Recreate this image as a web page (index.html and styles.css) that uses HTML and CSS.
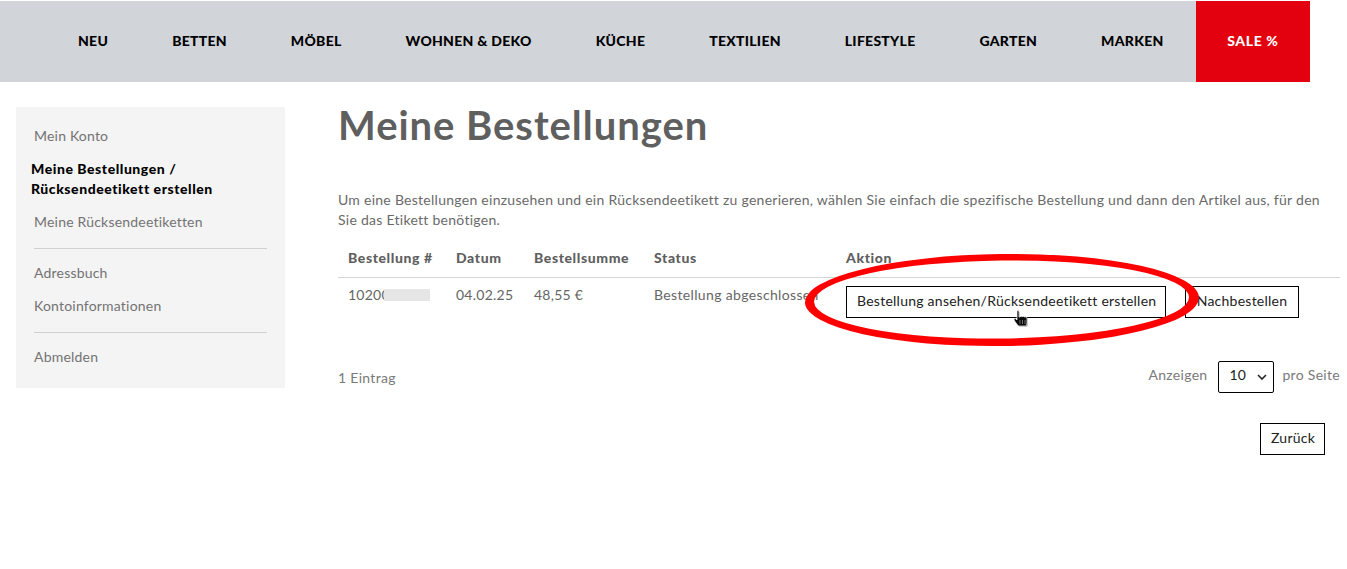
FILE: index.html
```html
<!DOCTYPE html>
<html lang="de">
<head>
<meta charset="utf-8">
<title>Meine Bestellungen</title>
<link rel="stylesheet" href="styles.css">
</head>
<body>
<nav class="nav">
  <a class="nav-item">NEU</a>
  <a class="nav-item">BETTEN</a>
  <a class="nav-item">MÖBEL</a>
  <a class="nav-item">WOHNEN &amp; DEKO</a>
  <a class="nav-item">KÜCHE</a>
  <a class="nav-item">TEXTILIEN</a>
  <a class="nav-item">LIFESTYLE</a>
  <a class="nav-item">GARTEN</a>
  <a class="nav-item">MARKEN</a>
  <a class="nav-item nav-sale">SALE %</a>
</nav>
<div class="page">
  <aside class="side">
    <a class="side-link">Mein Konto</a>
    <strong class="side-current">Meine Bestellungen / Rücksendeetikett erstellen</strong>
    <a class="side-link">Meine Rücksendeetiketten</a>
    <hr class="side-rule">
    <a class="side-link">Adressbuch</a>
    <a class="side-link">Kontoinformationen</a>
    <hr class="side-rule">
    <a class="side-link">Abmelden</a>
  </aside>
  <main class="main">
    <h1 class="title">Meine Bestellungen</h1>
    <p class="intro">Um eine Bestellungen einzusehen und ein Rücksendeetikett zu generieren, wählen Sie einfach die spezifische Bestellung und dann den Artikel aus, für den Sie das Etikett benötigen.</p>
    <table class="orders">
      <thead>
        <tr>
          <th class="col-id">Bestellung #</th>
          <th class="col-date">Datum</th>
          <th class="col-sum">Bestellsumme</th>
          <th class="col-status">Status</th>
          <th>Aktion</th>
        </tr>
      </thead>
      <tbody>
        <tr>
          <td><span class="order-no">10200<span class="redact"></span></span></td>
          <td>04.02.25</td>
          <td>48,55 €</td>
          <td class="status">Bestellung abgeschlossen</td>
          <td class="actions"><button class="btn btn-view">Bestellung ansehen/Rücksendeetikett erstellen</button><button class="btn btn-re">Nachbestellen</button></td>
        </tr>
      </tbody>
    </table>
    <div class="pager">
      <span class="count">1 Eintrag</span>
      <div class="per-page">
        <span class="per-label">Anzeigen</span>
        <span class="select">10<svg class="chev" width="10" height="6" viewBox="0 0 10 6"><path d="M1 1l4 4 4-4" fill="none" stroke="#222" stroke-width="1.6"/></svg></span>
        <span class="per-label">pro Seite</span>
      </div>
    </div>
    <div class="back"><button class="btn btn-back">Zurück</button></div>
  </main>
</div>
<svg class="mark" width="1347" height="569" viewBox="0 0 1347 569" aria-hidden="true">
  <g transform="rotate(-0.7 1002 300)">
    <path fill="#f00" fill-rule="evenodd" d="M805 300a197 46 0 1 0 394 0a197 46 0 1 0 -394 0ZM814 299.500a187.500 39 0 1 0 375 0a187.500 39 0 1 0 -375 0Z"/>
  </g>
  <path d="M1018 312c1-1 2 0 2 1v5h1c1-1 2-1 2 0 1-1 2-1 2 0 1-.5 3 0 3 1v5c0 2-1 3-2 3h-6c-1 0-2-2-3-3l-2-3c0-1 1-2 2-1l1 1v-9z" fill="#000" opacity=".3"/>
  <path d="M1017 311c1-1 2 0 2 1v5h1c1-1 2-1 2 0 1-1 2-1 2 0 1-.5 3 0 3 1v5c0 2-1 3-2 3h-6c-1 0-2-2-3-3l-2-3c0-1 1-2 2-1l1 1v-9z" fill="#0a0a0a" stroke="#fff" stroke-width=".7"/>
  <path d="M1020 320v4M1022.500 320v4M1025 320v4" stroke="#999" stroke-width=".7" fill="none"/>
</svg>
</body>
</html>
```

FILE: styles.css
```css
* { box-sizing: border-box; }
html, body { margin: 0; padding: 0; }
body {
  position: relative;
  width: 1347px;
  height: 569px;
  padding-top: 1px;
  overflow: hidden;
  background: #fff;
  color: #666;
  font-family: Lato, "Open Sans", sans-serif;
  font-size: 14px;
}
.nav {
  display: flex;
  height: 81px;
  width: 1310px;
  padding-left: 46px;
  background: #d1d4d9;
}
.nav-item {
  display: flex;
  align-items: center;
  padding: 0 32px 2px;
  color: #000;
  font-size: 14px;
  font-weight: 900;
  letter-spacing: 0.27px;
  white-space: nowrap;
}
.nav-sale {
  flex: 1;
  justify-content: center;
  padding: 0 0 2px;
  background: #e3000f;
  color: #fff;
  letter-spacing: 0.6px;
}
.page {
  display: flex;
  align-items: flex-start;
  padding: 25px 7px 0 16px;
}
.side {
  display: flex;
  flex-direction: column;
  flex: none;
  width: 269px;
  height: 281px;
  margin-right: 53px;
  padding: 18px 18px 0;
  background: #f4f4f4;
  color: #737373;
}
.side-link { line-height: 22px; margin-bottom: 11px; letter-spacing: 0.2px; }
.side-current {
  margin: 1px 0 12px -3px;
  color: #000;
  font-weight: 900;
  line-height: 20px;
  width: 200px;
  letter-spacing: 0.55px;
}
.side-rule {
  width: 100%;
  height: 1px;
  margin: 4px 0 13px;
  border: 0;
  background: #d0d0d0;
}
.main { flex: 1; min-width: 0; }
.title {
  margin: 0;
  height: 62px;
  color: #5f5f5f;
  font-size: 40px;
  font-weight: 700;
  line-height: 36px;
  letter-spacing: 0.95px;
}
.intro {
  margin: 21px 0 0;
  line-height: 20px;
  letter-spacing: 0.27px;
  color: #6a6a6a;
}
.orders {
  width: 100%;
  margin-top: 15px;
  border-collapse: collapse;
  table-layout: fixed;
}
.col-id { width: 108px; }
.col-date { width: 78px; }
.col-sum { width: 120px; }
.col-status { width: 192px; }
.orders th {
  height: 32px;
  padding: 0 10px 6px;
  border-bottom: 1px solid #d4d4d4;
  text-align: left;
  color: #5f5f5f;
  font-weight: 900;
  letter-spacing: 0.6px;
}
.orders td {
  padding: 8px 10px 0;
  height: 84px;
  vertical-align: top;
  letter-spacing: 0.25px;
  line-height: 18px;
}
.orders td.status {
  padding-right: 0;
  letter-spacing: 0.35px;
  white-space: nowrap;
}
.orders td.actions {
  display: flex;
  gap: 19px;
  padding: 8px 0 0 10px;
}
.order-no { position: relative; display: inline-block; }
.redact {
  position: absolute;
  left: 36px;
  top: 3px;
  width: 46px;
  height: 12px;
  background: #e6e6e6;
}
.btn {
  height: 32px;
  padding: 0 10px 2px;
  border: 1px solid #000;
  border-radius: 0;
  background: #fff;
  color: #222;
  font: inherit;
  letter-spacing: 0.25px;
  white-space: nowrap;
}
.btn-view { width: 320px; }
.btn-re { width: 114px; }
.btn-back { width: 65px; }
.pager {
  display: flex;
  justify-content: space-between;
  align-items: center;
  letter-spacing: 0.3px;
  color: #7a7a7a;
  margin-top: -1px;
}
.count { padding-top: 2px; }
.per-label { padding-bottom: 4px; }
.per-page { display: flex; align-items: center; gap: 10px; }
.select {
  display: flex;
  align-items: center;
  justify-content: space-between;
  width: 56px;
  height: 32px;
  margin: 0 -2px 0 1px;
  padding: 0 6px 4px 10px;
  border: 1px solid #000;
  border-radius: 2px;
  color: #222;
}
.chev { display: block; margin-top: 4px; }
.back {
  display: flex;
  justify-content: flex-end;
  margin-top: 30px;
  padding-right: 15px;
}
.mark {
  position: absolute;
  left: 0;
  top: 0;
  pointer-events: none;
}
```
